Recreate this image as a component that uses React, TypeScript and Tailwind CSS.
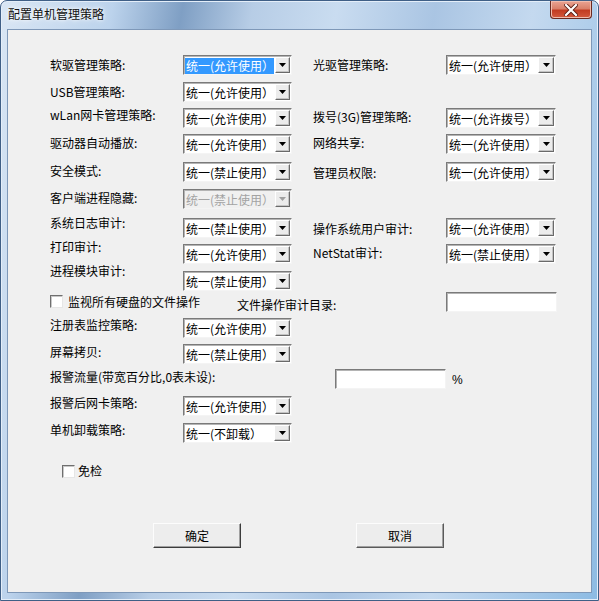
import React from 'react';

type ComboProps = {
  value: string;
  w: string;
  disabled?: boolean;
  selected?: boolean;
};

// classic sunken combo box
function Combo({ value, w, disabled, selected }: ComboProps) {
  return (
    <div
      className={`flex h-[20px] ${w} shrink-0 border border-t-[#7a7a7a] border-l-[#7a7a7a] border-r-[#f4f4f4] border-b-[#f4f4f4] ${
        disabled ? 'bg-[#f0f0f0]' : 'bg-white'
      } shadow-[inset_1px_1px_0_#b4b4b4]`}
    >
      <div className="flex flex-1 items-center pl-[1px] pt-[1px] pr-[1px]">
        <span
          className={`flex h-[16px] w-full items-center pl-[1px] leading-[16px] whitespace-nowrap ${
            selected ? 'bg-[#3399ff] text-white' : disabled ? 'text-[#a3a3a3]' : 'text-black'
          }`}
        >
          {value}
        </span>
      </div>
      <div className="mt-[1px] mr-[1px] flex h-[16px] w-[16px] items-center justify-center border border-t-white border-l-white border-r-[#6a6a6a] border-b-[#6a6a6a] bg-[#ececec] shadow-[inset_-1px_-1px_0_#c4c4c4]">
        <svg width="7" height="4" viewBox="0 0 7 4">
          <path d="M0 0H7L3.5 4Z" fill={disabled ? '#a0a0a0' : '#000'} />
        </svg>
      </div>
    </div>
  );
}

function TextBox({ w }: { w: string }) {
  return (
    <div
      className={`h-[20px] ${w} shrink-0 border border-t-[#7a7a7a] border-l-[#7a7a7a] border-r-[#f4f4f4] border-b-[#f4f4f4] bg-white shadow-[inset_1px_1px_0_#b4b4b4]`}
    />
  );
}

function CheckBox() {
  return (
    <div className="h-[13px] w-[13px] shrink-0 border border-t-[#6f6f6f] border-l-[#6f6f6f] border-r-[#e6e6e6] border-b-[#e6e6e6] bg-white shadow-[inset_1px_1px_0_#c8c8c8]" />
  );
}

type FieldProps = {
  label: string;
  labelCls: string;
  w: string;
  labelW: string;
  children: React.ReactNode;
};

function Field({ label, labelCls, w, labelW, children }: FieldProps) {
  return (
    <div className={`flex ${w}`}>
      <div className={`${labelW} ${labelCls} h-[16px] leading-[16px] whitespace-nowrap`}>{label}</div>
      {children}
    </div>
  );
}

const ALLOW = '统一(允许使用）';
const DENY = '统一(禁止使用）';

export default function App() {
  return (
    <div className="h-[601px] w-[599px] bg-white font-['Noto_Sans_CJK_SC','Liberation_Sans',sans-serif] text-[12px] text-black">
      <div className="flex h-full w-full flex-col rounded-t-[7px] border border-[#3f5f86] bg-[linear-gradient(100deg,#d9e6f4_0%,#bcd3ec_16%,#7f9fc4_26%,#b7cde6_36%,#c9dcf0_48%,#aac5e3_62%,#c4d9ef_76%,#8dbbe3_100%)] shadow-[inset_0_0_0_1px_#e4eef9]">
        {/* title bar */}
        <div className="flex h-[28px] shrink-0 items-start justify-between">
          <div className="ml-[7px] mt-[5px] leading-[16px] text-[#111] [text-shadow:0_0_6px_#fff,0_0_3px_#fff]">
            配置单机管理策略
          </div>
          <div className="mr-[6px] flex h-[18px] w-[42px] items-center justify-center rounded-b-[4px] border border-t-0 border-[#6b2a20] bg-[linear-gradient(to_bottom,#eaa493_0%,#d9806a_45%,#c23c22_55%,#d45a3e_100%)] shadow-[inset_0_0_0_1px_#f0bcae]">
            <svg width="14" height="12" viewBox="0 0 14 12">
              <path d="M2 1L12 11M12 1L2 11" stroke="#5b1d14" strokeWidth="4" strokeLinecap="square" />
              <path d="M2 1L12 11M12 1L2 11" stroke="#ffffff" strokeWidth="2.2" strokeLinecap="square" />
            </svg>
          </div>
        </div>

        {/* client area */}
        <div className="mx-[6px] mb-[7px] flex flex-1 flex-col border border-[#7e98b8] bg-[#f0f0f0] pl-[42px]">
          {/* row 1 */}
          <div className="mt-[25px] flex h-[20px]">
            <Field label="软驱管理策略:" labelCls="mt-[2px]" w="w-[263px]" labelW="w-[133px]">
              <Combo value={ALLOW} w="w-[109px]" selected />
            </Field>
            <Field label="光驱管理策略:" labelCls="mt-[2px]" w="w-[243px]" labelW="w-[133px]">
              <Combo value={ALLOW} w="w-[110px]" />
            </Field>
          </div>
          {/* row 2 */}
          <div className="mt-[7px] flex h-[20px]">
            <Field label="USB管理策略:" labelCls="mt-[2px]" w="w-[263px]" labelW="w-[133px]">
              <Combo value={ALLOW} w="w-[109px]" />
            </Field>
          </div>
          {/* row 3 */}
          <div className="mt-[6px] flex h-[20px]">
            <Field label="wLan网卡管理策略:" labelCls="mt-[-1px]" w="w-[263px]" labelW="w-[133px]">
              <Combo value={ALLOW} w="w-[109px]" />
            </Field>
            <Field label="拨号(3G)管理策略:" labelCls="mt-[1px]" w="w-[243px]" labelW="w-[133px]">
              <Combo value="统一(允许拨号）" w="w-[110px]" />
            </Field>
          </div>
          {/* row 4 */}
          <div className="mt-[6px] flex h-[20px]">
            <Field label="驱动器自动播放:" labelCls="mt-[1px]" w="w-[263px]" labelW="w-[133px]">
              <Combo value={ALLOW} w="w-[109px]" />
            </Field>
            <Field label="网络共享:" labelCls="mt-[1px]" w="w-[243px]" labelW="w-[133px]">
              <Combo value={ALLOW} w="w-[110px]" />
            </Field>
          </div>
          {/* row 5 */}
          <div className="mt-[8px] flex h-[20px]">
            <Field label="安全模式:" labelCls="mt-[1px]" w="w-[263px]" labelW="w-[133px]">
              <Combo value={DENY} w="w-[109px]" />
            </Field>
            <Field label="管理员权限:" labelCls="mt-[3px]" w="w-[243px]" labelW="w-[133px]">
              <Combo value={ALLOW} w="w-[110px]" />
            </Field>
          </div>
          {/* row 6 */}
          <div className="mt-[7px] flex h-[20px]">
            <Field label="客户端进程隐藏:" labelCls="mt-[1px]" w="w-[263px]" labelW="w-[133px]">
              <Combo value={DENY} w="w-[109px]" disabled />
            </Field>
          </div>
          {/* row 7 */}
          <div className="mt-[9px] flex h-[20px]">
            <Field label="系统日志审计:" labelCls="mt-[-3px]" w="w-[263px]" labelW="w-[133px]">
              <Combo value={DENY} w="w-[109px]" />
            </Field>
            <Field label="操作系统用户审计:" labelCls="mt-[3px]" w="w-[243px]" labelW="w-[133px]">
              <Combo value={ALLOW} w="w-[110px]" />
            </Field>
          </div>
          {/* row 8 */}
          <div className="mt-[6px] flex h-[20px]">
            <Field label="打印审计:" labelCls="mt-[-5px]" w="w-[263px]" labelW="w-[133px]">
              <Combo value={ALLOW} w="w-[109px]" />
            </Field>
            <Field label="NetStat审计:" labelCls="mt-[1px]" w="w-[243px]" labelW="w-[133px]">
              <Combo value={DENY} w="w-[110px]" />
            </Field>
          </div>
          {/* row 9 */}
          <div className="mt-[7px] flex h-[20px]">
            <Field label="进程模块审计:" labelCls="mt-[-8px]" w="w-[263px]" labelW="w-[133px]">
              <Combo value={DENY} w="w-[109px]" />
            </Field>
          </div>
          {/* row 10 */}
          <div className="mt-[1px] flex h-[20px]">
            <div className="flex w-[187px] items-start pt-[2px]">
              <div className="mt-[1px]">
                <CheckBox />
              </div>
              <span className="ml-[5px] leading-[16px] whitespace-nowrap">监视所有硬盘的文件操作</span>
            </div>
            <div className="mt-[5px] w-[209px] leading-[16px]">文件操作审计目录:</div>
            <TextBox w="w-[111px]" />
          </div>
          {/* row 11 */}
          <div className="mt-[6px] flex h-[20px]">
            <Field label="注册表监控策略:" labelCls="mt-[-1px]" w="w-[263px]" labelW="w-[133px]">
              <Combo value={ALLOW} w="w-[109px]" />
            </Field>
          </div>
          {/* row 12 */}
          <div className="mt-[6px] flex h-[20px]">
            <Field label="屏幕拷贝:" labelCls="mt-[0px]" w="w-[263px]" labelW="w-[133px]">
              <Combo value={DENY} w="w-[109px]" />
            </Field>
          </div>
          {/* row 13 */}
          <div className="mt-[5px] flex h-[20px]">
            <div className="w-[285px] leading-[16px] whitespace-nowrap">报警流量(带宽百分比,0表未设):</div>
            <TextBox w="w-[111px]" />
            <span className="ml-[6px] mt-[3px] font-['Liberation_Sans',sans-serif] leading-[16px]">%</span>
          </div>
          {/* row 14 */}
          <div className="mt-[7px] flex h-[20px]">
            <Field label="报警后网卡策略:" labelCls="mt-[-1px]" w="w-[263px]" labelW="w-[133px]">
              <Combo value={ALLOW} w="w-[109px]" />
            </Field>
          </div>
          {/* row 15 */}
          <div className="mt-[7px] flex h-[20px]">
            <Field label="单机卸载策略:" labelCls="mt-[-1px]" w="w-[263px]" labelW="w-[133px]">
              <Combo value="统一(不卸载）" w="w-[109px]" />
            </Field>
          </div>
          {/* row 16 */}
          <div className="ml-[12px] mt-[21px] flex h-[14px] items-center">
            <CheckBox />
            <span className="ml-[3px] leading-[16px]">免检</span>
          </div>
          {/* buttons */}
          <div className="ml-[103px] mt-[45px] flex gap-[115px]">
            <button className="flex h-[25px] w-[88px] items-center justify-center border border-t-[#fcfcfc] border-l-[#fcfcfc] border-r-[#3c3c3c] border-b-[#3c3c3c] bg-[#ededed] shadow-[inset_-1px_-1px_0_#a0a0a0]">
              确定
            </button>
            <button className="flex h-[25px] w-[88px] items-center justify-center border border-t-[#fcfcfc] border-l-[#fcfcfc] border-r-[#5a5a5a] border-b-[#5a5a5a] bg-[#ededed] shadow-[inset_-1px_-1px_0_#a0a0a0]">
              取消
            </button>
          </div>
        </div>
      </div>
    </div>
  );
}
